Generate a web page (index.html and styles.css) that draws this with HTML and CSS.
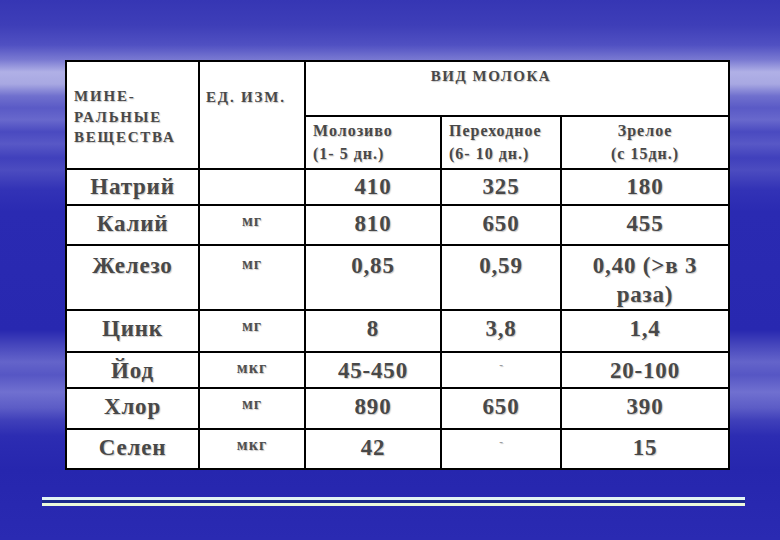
FILE: index.html
```html
<!DOCTYPE html>
<html lang="ru">
<head>
<meta charset="utf-8">
<title>Минеральные вещества</title>
<link rel="stylesheet" href="styles.css">
</head>
<body>
<div class="slide">
  <table class="minerals">
    <colgroup>
      <col class="c1"><col class="c2"><col class="c3"><col class="c4"><col class="c5">
    </colgroup>
    <tr class="h1">
      <td rowspan="2"><div class="head-name">МИНЕ-<br>РАЛЬНЫЕ<br>ВЕЩЕСТВА</div></td>
      <td rowspan="2"><div class="head-unit">ЕД. ИЗМ.</div></td>
      <td colspan="3"><div class="head-kind">ВИД МОЛОКА</div></td>
    </tr>
    <tr class="h2">
      <td><div class="sub sub-left">Молозиво<br>(1- 5 дн.)</div></td>
      <td><div class="sub sub-left">Переходное<br>(6- 10 дн.)</div></td>
      <td><div class="sub sub-center">Зрелое<br>(с 15дн.)</div></td>
    </tr>
    <tr class="r1">
      <td><div class="name">Натрий</div></td><td></td>
      <td><div class="val">410</div></td><td><div class="val">325</div></td><td><div class="val">180</div></td>
    </tr>
    <tr class="r2">
      <td><div class="name">Калий</div></td><td><div class="unit">мг</div></td>
      <td><div class="val">810</div></td><td><div class="val">650</div></td><td><div class="val">455</div></td>
    </tr>
    <tr class="r3">
      <td><div class="name">Железо</div></td><td><div class="unit">мг</div></td>
      <td><div class="val">0,85</div></td><td><div class="val">0,59</div></td><td><div class="val">0,40 (&gt;в 3<br>раза)</div></td>
    </tr>
    <tr class="r4">
      <td><div class="name">Цинк</div></td><td><div class="unit">мг</div></td>
      <td><div class="val">8</div></td><td><div class="val">3,8</div></td><td><div class="val">1,4</div></td>
    </tr>
    <tr class="r5">
      <td><div class="name">Йод</div></td><td><div class="unit">мкг</div></td>
      <td><div class="val">45-450</div></td><td><div class="dash">-</div></td><td><div class="val">20-100</div></td>
    </tr>
    <tr class="r6">
      <td><div class="name">Хлор</div></td><td><div class="unit">мг</div></td>
      <td><div class="val">890</div></td><td><div class="val">650</div></td><td><div class="val">390</div></td>
    </tr>
    <tr class="r7">
      <td><div class="name">Селен</div></td><td><div class="unit">мкг</div></td>
      <td><div class="val">42</div></td><td><div class="dash">-</div></td><td><div class="val">15</div></td>
    </tr>
  </table>
  <div class="rule"></div>
</div>
</body>
</html>
```

FILE: styles.css
```css
html, body {
  margin: 0;
  padding: 0;
}

body {
  width: 780px;
  height: 540px;
  overflow: hidden;
  font-family: "Liberation Serif", "Times New Roman", serif;
  background:
    linear-gradient(180deg,
      #3636b4 0px,
      #3e3eb8 25px,
      #5050c2 45px,
      #7a7ad2 60px,
      #b0b0e6 72px,
      #a8a8e2 84px,
      #7070ce 96px,
      #5a5ac6 108px,
      #6868cc 120px,
      #4a4ac0 132px,
      #5858c6 144px,
      #4040bc 158px,
      #4c4cc0 170px,
      #3232b6 190px,
      #2a2ab2 212px,
      #2828b0 330px,
      #4646bc 345px,
      #6464ca 362px,
      #5656c4 375px,
      #7070d0 392px,
      #5c5cc6 408px,
      #4040ba 420px,
      #2c2cb2 436px,
      #2626ae 470px,
      #2a2ab2 540px);
}

.slide {
  padding-top: 60px;
}

.minerals {
  margin-left: 65px;
  width: 663px;
  border-collapse: collapse;
  table-layout: fixed;
  background: #ffffff;
}

.c1 { width: 133px; }
.c2 { width: 106px; }
.c3 { width: 136px; }
.c4 { width: 120px; }
.c5 { width: 168px; }

.minerals td {
  border: 2px solid #000000;
  padding: 0;
  color: #484848;
  font-weight: bold;
  vertical-align: top;
  text-shadow: 1px 1px 1px rgba(0, 0, 0, 0.22);
}

.h1 td { height: 53px; }
.h2 td { height: 51px; }
.r1 td { height: 34px; }
.r2 td { height: 38px; }
.r3 td { height: 63px; }
.r4 td { height: 40px; }
.r5 td { height: 34px; }
.r6 td { height: 39px; }
.r7 td { height: 38px; }

.head-name {
  font-size: 15px;
  line-height: 20.5px;
  letter-spacing: 1.8px;
  padding: 24px 0 0 7px;
}

.head-unit {
  font-size: 15px;
  line-height: 20.5px;
  letter-spacing: 1.8px;
  padding: 25px 0 0 6px;
}

.head-kind {
  font-size: 15px;
  line-height: 20px;
  letter-spacing: 1.5px;
  text-align: center;
  padding: 4px 52px 0 0;
}

.sub {
  font-size: 16px;
  line-height: 22.5px;
  letter-spacing: 1px;
  padding-top: 3px;
}

.sub-left {
  text-align: left;
  padding-left: 7px;
}

.sub-center {
  text-align: center;
}

.name,
.val {
  font-size: 23px;
  line-height: 30px;
  letter-spacing: 0.8px;
  padding-top: 3px;
  text-align: center;
}

.r1 .name,
.r1 .val {
  padding-top: 2px;
}

.r3 .name,
.r3 .val {
  line-height: 29px;
  padding-top: 5px;
}

.unit {
  font-size: 16px;
  line-height: 18px;
  letter-spacing: 1px;
  padding-top: 6px;
  text-align: center;
  color: #505050;
}

.r3 .unit {
  padding-top: 9px;
}

.dash {
  font-size: 11px;
  line-height: 12px;
  padding-top: 5px;
  text-align: center;
  color: #9a9a9a;
}

.rule {
  margin: 27px 0 0 42px;
  width: 703px;
  height: 3px;
  border-top: 3px solid #e2f4f4;
  border-bottom: 3px solid #ecf8dc;
  background: #1c2a8c;
}
```
